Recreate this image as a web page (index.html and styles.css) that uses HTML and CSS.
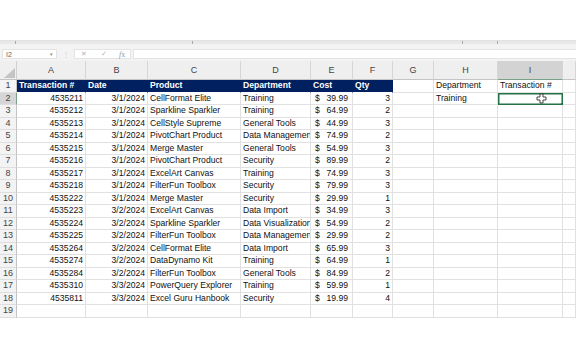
FILE: index.html
```html
<!DOCTYPE html>
<html lang="en">
<head>
  <meta charset="UTF-8">
  <meta name="viewport" content="width=device-width, initial-scale=1.0">
  <title>Transactions - Excel</title>
  <link rel="stylesheet" href="styles.css">
</head>
<body>

  <!-- Ribbon (collapsed) -->
  <div class="ribbon"></div>
  <div class="ribbon-edge">
    <span class="tick tick-1"></span>
    <span class="tick tick-2"></span>
    <span class="tick tick-3"></span>
    <span class="tick tick-4"></span>
  </div>

  <!-- Formula Bar -->
  <div class="formula-bar">
    <div class="name-box">
      <span>I2</span>
      <span class="drop">&#9662;</span>
    </div>
    <div class="grip">&#8942;</div>
    <div class="fx-box">
      <span class="cancel">&#10005;</span>
      <span class="enter">&#10003;</span>
      <span class="fx"><i>f</i>x</span>
    </div>
    <div class="formula-input"></div>
  </div>

  <!-- Sheet Grid -->
  <div class="sheet" id="sheet"></div>

  <script>
    const cols = ['A', 'B', 'C', 'D', 'E', 'F', 'G', 'H', 'I', ''];

    const rows = [
      ['4535211', '3/1/2024', 'CellFormat Elite', 'Training', '39.99', '3'],
      ['4535212', '3/1/2024', 'Sparkline Sparkler', 'Training', '64.99', '2'],
      ['4535213', '3/1/2024', 'CellStyle Supreme', 'General Tools', '44.99', '3'],
      ['4535214', '3/1/2024', 'PivotChart Product', 'Data Management', '74.99', '2'],
      ['4535215', '3/1/2024', 'Merge Master', 'General Tools', '54.99', '3'],
      ['4535216', '3/1/2024', 'PivotChart Product', 'Security', '89.99', '2'],
      ['4535217', '3/1/2024', 'ExcelArt Canvas', 'Training', '74.99', '3'],
      ['4535218', '3/1/2024', 'FilterFun Toolbox', 'Security', '79.99', '3'],
      ['4535222', '3/1/2024', 'Merge Master', 'Security', '29.99', '1'],
      ['4535223', '3/2/2024', 'ExcelArt Canvas', 'Data Import', '34.99', '3'],
      ['4535224', '3/2/2024', 'Sparkline Sparkler', 'Data Visualization', '54.99', '2'],
      ['4535225', '3/2/2024', 'FilterFun Toolbox', 'Data Management', '29.99', '2'],
      ['4535264', '3/2/2024', 'CellFormat Elite', 'Data Import', '65.99', '3'],
      ['4535274', '3/2/2024', 'DataDynamo Kit', 'Training', '64.99', '1'],
      ['4535284', '3/2/2024', 'FilterFun Toolbox', 'General Tools', '84.99', '2'],
      ['4535310', '3/3/2024', 'PowerQuery Explorer', 'Training', '59.99', '1'],
      ['4535811', '3/3/2024', 'Excel Guru Hanbook', 'Security', '19.99', '4']
    ];

    const sheet = document.getElementById('sheet');

    function cell(cls, html) {
      const div = document.createElement('div');
      div.className = 'cell ' + cls;
      div.innerHTML = html || '';
      sheet.appendChild(div);
      return div;
    }

    // column headers
    cell('corner', '<svg width="11" height="10" viewBox="0 0 11 10"><polygon points="11,0 11,10 0,10" fill="#c4c4c4"/></svg>');
    cols.forEach(function (c) {
      cell('col-head' + (c === 'I' ? ' active' : ''), c);
    });

    // row 1: table headers
    cell('row-head', '1');
    ['Transaction #', 'Date', 'Product', 'Department', 'Cost', 'Qty'].forEach(function (h) {
      cell('head', h);
    });
    cell('');
    cell('', 'Department');
    cell('', 'Transaction #');
    cell('');

    // data rows
    rows.forEach(function (r, i) {
      cell('row-head' + (i === 0 ? ' active' : ''), i + 2);
      cell('num', r[0]);
      cell('num', r[1]);
      cell('', r[2]);
      cell('', r[3]);
      cell('cost', '<span>$</span><span>' + r[4] + '</span>');
      cell('num', r[5]);
      cell('');
      if (i === 0) {
        cell('', 'Training');
        cell('selected', '<svg class="pointer" width="11" height="11" viewBox="0 0 11 11"><path d="M4 1h3v3h3v3H7v3H4V7H1V4h3z" fill="#fff" stroke="#333" stroke-width="0.9"/></svg>');
      } else {
        cell('');
        cell('');
      }
      cell('');
    });

    // row 19
    cell('row-head', '19');
    cols.forEach(function () { cell(''); });
  </script>

</body>
</html>
```

FILE: styles.css
```css
body {
  margin: 0;
  padding: 0;
  background: #fff;
  font-family: 'Liberation Sans', Arial, sans-serif;
  color: #111;
  overflow: hidden;
}

/* Ribbon */
.ribbon {
  height: 40px;
  background: #fff;
}

.ribbon-edge {
  height: 4px;
  background: #e8e8e8;
  border-top: 1px solid #e2e2e2;
  box-sizing: border-box;
  display: flex;
}

.tick {
  width: 1px;
  height: 3px;
  background: #a8a8a8;
}

.tick-1 { margin-left: 15px; }
.tick-2 { margin-left: 176px; }
.tick-3 { margin-left: 269px; }
.tick-4 { margin-left: 34px; }

/* Formula Bar */
.formula-bar {
  display: flex;
  align-items: center;
  height: 17px;
  padding: 3px 0 0 2px;
  box-sizing: border-box;
  background: #f3f3f3;
  font-size: 7px;
  color: #666;
}

.name-box {
  width: 55px;
  height: 10px;
  background: #fff;
  border: 1px solid #e4e4e4;
  box-sizing: border-box;
  display: flex;
  justify-content: space-between;
  align-items: center;
  padding: 0 3px 0 3px;
}

.name-box .drop {
  font-size: 5px;
  color: #888;
}

.grip {
  width: 17px;
  text-align: center;
  color: #c8c8c8;
  font-size: 8px;
}

.fx-box {
  width: 57px;
  height: 10px;
  background: #fff;
  border: 1px solid #e4e4e4;
  box-sizing: border-box;
  display: flex;
  align-items: center;
  padding-left: 6px;
  color: #b5b5b5;
  font-size: 7px;
}

.enter {
  margin-left: 14px;
}

.fx {
  margin-left: 12px;
  font-family: 'Liberation Serif', serif;
  font-size: 8px;
  color: #999;
}

.formula-input {
  flex: 1;
  height: 10px;
  margin-left: 2px;
  background: #fff;
  border: 1px solid #e4e4e4;
  border-right: none;
  box-sizing: border-box;
}

/* Sheet */
.sheet {
  display: grid;
  grid-template-columns: 17px 69px 62px 93px 70px 42px 40px 41px 64px 65px 13px;
  grid-template-rows: 19px;
  grid-auto-rows: 12.5px;
  font-size: 8.6px;
  background: #f3f3f3;
}

.cell {
  box-sizing: border-box;
  border-right: 1px solid #e1e1e1;
  border-bottom: 1px solid #e1e1e1;
  background: #fff;
  padding: 0 2px;
  white-space: nowrap;
  overflow: hidden;
  line-height: 11.5px;
}

.corner {
  background: #efefef;
  border-right: 1px solid #cfcfcf;
  border-bottom: 1px solid #c4c4c4;
  display: flex;
  align-items: flex-end;
  justify-content: flex-end;
  padding: 0 1px 1px 0;
}

.col-head {
  background: #efefef;
  color: #444;
  text-align: center;
  font-size: 9px;
  line-height: 18px;
  border-right: 1px solid #d6d6d6;
  border-bottom: 1px solid #c4c4c4;
}

.col-head.active {
  background: #d3d3d3;
  border-bottom: 1px solid #7aa28a;
}

.row-head {
  background: #f3f3f3;
  color: #444;
  text-align: center;
  font-size: 9px;
  border-right: 1px solid #c4c4c4;
  border-bottom: 1px solid #dedede;
}

.row-head.active {
  background: #d6d6d6;
  border-right: 1px solid #7aa28a;
}

.head {
  background: #002060;
  color: #fff;
  font-weight: bold;
  border-right-color: #002060;
  border-bottom-color: #fff;
}

.num {
  text-align: right;
}

.cost {
  display: flex;
  justify-content: space-between;
  padding: 0 4px 0 4px;
}

.selected {
  position: relative;
  border: none;
  box-shadow: inset 0 0 0 1.5px #217346;
}

.selected::after {
  content: '';
  position: absolute;
  right: -1px;
  bottom: -1px;
  width: 3px;
  height: 3px;
  background: #217346;
}

.pointer {
  position: absolute;
  left: 38px;
  top: 0;
}
```
